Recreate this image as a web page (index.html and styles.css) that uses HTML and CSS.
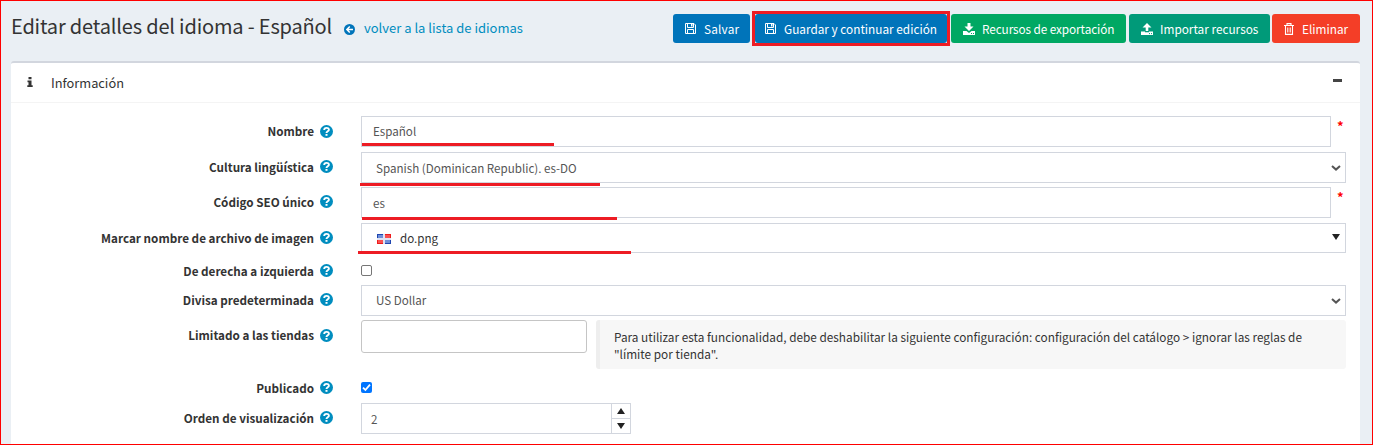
FILE: index.html
```html
<!DOCTYPE html>
<html lang="es">
<head>
<meta charset="utf-8">
<title>Editar detalles del idioma</title>
<link rel="stylesheet" href="styles.css">
</head>
<body>
<svg class="defs" aria-hidden="true">
  <symbol id="help" viewBox="0 0 13 13"><circle cx="6.5" cy="6.5" r="6.5" fill="#008dbf"/><path d="M4.200 4.900C4.200 2.200 8.900 2.200 8.900 4.700C8.900 6.400 6.500 6.200 6.500 8" fill="none" stroke="#fff" stroke-width="1.900"/><rect x="5.500" y="9" width="2" height="1.800" fill="#fff"/></symbol>
  <symbol id="save" viewBox="0 0 11 11"><path d="M.5.500H9L10.500 2V10.500H.500ZM2.500 .500V4.500H8.500V.500M2.500 10.500V6.500H8.500V10.500" fill="none" stroke="#fff"/><rect x="6" y="1" width="1.500" height="2.500" fill="#fff"/></symbol>
  <symbol id="chevron" viewBox="0 0 10 6"><path d="M1 1L5 4.600L9 1" fill="none" stroke="#555" stroke-width="2"/></symbol>
</svg>
<div class="page">
  <header class="topbar">
    <h1 class="title">Editar detalles del idioma - Español</h1>
    <a class="back"><svg class="back-icon" viewBox="0 0 12 12"><circle cx="6" cy="6" r="6" fill="#0074ba"/><path d="M9.800 6H3.500M6.300 2.800L3.100 6L6.300 9.200" fill="none" stroke="#fff" stroke-width="1.600"/></svg><span class="t">volver a la lista de idiomas</span></a>
    <div class="actions">
      <button class="btn save"><svg class="ico disk"><use href="#save"/></svg><span class="t">Salvar</span></button>
      <button class="btn continue"><svg class="ico disk"><use href="#save"/></svg><span class="t">Guardar y continuar edición</span></button>
      <button class="btn export"><svg class="ico" viewBox="0 0 12 12"><path d="M4.500 0H7.500V3.500H10.500L6 8L1.500 3.500H4.500ZM0 8H3.500L6 10L8.500 8H12V12H0Z" fill="#fff"/><path d="M8 10.500H9M10 10.500H11" stroke="#00a863"/></svg><span class="t">Recursos de exportación</span></button>
      <button class="btn import"><svg class="ico" viewBox="0 0 12 12"><path d="M4.700 8V4.500H1.500L6 0L10.500 4.500H7.300V8ZM0 8.500H4V9.300H8V8.500H12V12H0Z" fill="#fff"/><path d="M8 10.600H9M10 10.600H11" stroke="#009a79"/></svg><span class="t">Importar recursos</span></button>
      <button class="btn delete"><svg class="ico bin" viewBox="0 0 12 12"><path d="M1 2.500H11M4 2.500V.600H8V2.500M2.500 2.500V11.400H9.500V2.500M4.800 4.500V9.500M7.200 4.500V9.500" fill="none" stroke="#fff" stroke-width="1.100"/></svg><span class="t">Eliminar</span></button>
    </div>
  </header>
  <section class="card">
    <div class="card-head">
      <svg class="info" viewBox="0 0 6 10"><path d="M1.500 0H4.500V2.300H1.500ZM.500 3.500H4.500V8.200H5.700V10H.300V8.200H1.500V5.200H.500Z" fill="#333"/></svg>
      <span class="card-title">Información</span>
      <span class="collapse"></span>
    </div>
    <div class="form">
      <div class="row r-name"><label class="label"><b>Nombre</b><svg class="help"><use href="#help"/></svg></label><div class="input short"><span class="val">Español</span><i class="mark m1"></i></div><span class="req">*</span></div>
      <div class="row r-culture"><label class="label"><b>Cultura lingüística</b><svg class="help"><use href="#help"/></svg></label><div class="input select"><span>Spanish (Dominican Republic). es-DO</span><svg class="chev"><use href="#chevron"/></svg><i class="mark m2"></i></div></div>
      <div class="row r-seo"><label class="label"><b>Código SEO único</b><svg class="help"><use href="#help"/></svg></label><div class="input short"><span>es</span><i class="mark m3"></i></div><span class="req">*</span></div>
      <div class="row r-flag"><label class="label"><b>Marcar nombre de archivo de imagen</b><svg class="help"><use href="#help"/></svg></label><div class="input flagbox"><svg class="flag" viewBox="0 0 14 10"><path d="M0 0H6V4H0ZM8 6H14V10H8Z" fill="#1f46b0"/><path d="M1 1H6V4H1ZM8 6H13V9H8Z" fill="#6f8fd8"/><path d="M8 0H14V4H8ZM0 6H6V10H0Z" fill="#ee1c1c"/><path d="M8 1H13V4H8ZM1 6H6V9H1Z" fill="#fa5050"/><path d="M6 0H8V10H6ZM0 4H14V6H0Z" fill="#dfe2f2"/></svg><span class="file">do.png</span><svg class="tri" viewBox="0 0 8 6"><path d="M0 0H8L4 6Z" fill="#222"/></svg><i class="mark m4"></i></div></div>
      <div class="row r-rtl"><label class="label"><b>De derecha a izquierda</b><svg class="help"><use href="#help"/></svg></label><span class="check"></span></div>
      <div class="row r-currency"><label class="label"><b>Divisa predeterminada</b><svg class="help"><use href="#help"/></svg></label><div class="input select"><span class="val">US Dollar</span><svg class="chev"><use href="#chevron"/></svg></div></div>
      <div class="row r-stores"><label class="label"><b>Limitado a las tiendas</b><svg class="help"><use href="#help"/></svg></label><div class="multi"></div><div class="note">Para utilizar esta funcionalidad, debe deshabilitar la siguiente configuración: configuración del catálogo &gt; ignorar las reglas de<br>"límite por tienda".</div></div>
      <div class="row r-pub"><label class="label"><b>Publicado</b><svg class="help"><use href="#help"/></svg></label><span class="check on"><svg viewBox="0 0 11 11"><path d="M2 5.700L4.400 8L9 2.700" fill="none" stroke="#fff" stroke-width="1.800"/></svg></span></div>
      <div class="row r-order"><label class="label"><b>Orden de visualización</b><svg class="help"><use href="#help"/></svg></label><div class="input number"><span>2</span><span class="spin"><span class="step"><svg class="tri" viewBox="0 0 8 6"><path d="M0 6H8L4 0Z" fill="#222"/></svg></span><span class="step"><svg class="tri" viewBox="0 0 8 6"><path d="M0 0H8L4 6Z" fill="#222"/></svg></span></span></div></div>
    </div>
  </section>
</div>
</body>
</html>
```
FILE: styles.css
```css
* { box-sizing: border-box; }
body { margin: 0; font-family: "Noto Sans CJK SC", "Noto Sans", sans-serif; font-size: 13px; color: #333; overflow: hidden; }
svg { display: block; flex: none; }
.defs { position: absolute; width: 0; height: 0; }
.page { height: 445px; border: 1px solid #f00; background: #eaeff4; padding: 0 12px 0 10px; display: flex; flex-direction: column; overflow: hidden; }
.topbar { height: 60px; flex: none; display: flex; align-items: flex-start; white-space: nowrap; }
.title { margin: 10px 0 0; font-size: 20px; line-height: 30px; font-weight: 400; letter-spacing: -0.17px; width: 333px; }
.back { display: flex; align-items: center; height: 24px; margin-top: 15px; color: #008dbf; }
.back-icon { width: 11px; height: 11px; margin: 2px 9px 0 0; }
.back .t { padding-bottom: 1px; }
.actions { margin-left: auto; margin-top: 13px; display: flex; }
.btn { position: relative; height: 29px; border: 0; border-radius: 3px; padding: 0 0 0 12px; display: flex; align-items: center; color: #fff; font: inherit; font-size: 11.8px; white-space: nowrap; }
.ico { width: 12px; height: 12px; margin-right: 7px; }
.disk { width: 11px; height: 11px; margin-right: 8px; }
.bin { margin: 0 6px 0 -1px; }
.delete .t { margin-left: 1px; }
.save { width: 77px; background: #0074ba; margin-right: 5px; letter-spacing: .2px; }
.continue { width: 192px; padding-left: 10px; background: #0074ba; margin-right: 4px; }
.continue::after { content: ""; position: absolute; inset: -3px; border: 3px solid #ed1c24; }
.export { width: 175px; background: #00a863; margin-right: 3px; letter-spacing: -.1px; }
.import { width: 141px; background: #009a79; margin-right: 2px; }
.delete { width: 88px; background: #f43e27; }
.card { flex: 1; background: #fff; border-top: 2px solid #d2d6de; border-radius: 3px 3px 0 0; }
.card-head { height: 40px; border-bottom: 1px solid #f4f4f4; display: flex; align-items: center; padding: 0 18px 0 16px; }
.info { width: 6px; height: 10px; margin-bottom: 2px; }
.card-title { margin-left: 18px; font-size: 12.8px; }
.collapse { width: 9px; height: 3px; background: #444; margin: 0 0 4px auto; }
.form { padding: 13px 14px 0 0; font-size: 11.6px; }
.row { display: flex; align-items: flex-start; height: 35px; }
.r-name, .r-seo { height: 36px; }
.label { width: 322px; height: 29px; margin-right: 28px; display: flex; justify-content: flex-end; align-items: center; flex: none; white-space: nowrap; font-size: 11.7px; }
.label b { padding-bottom: 1px; }
.r-name .label, .r-stores .label { height: 31px; }
.r-name .label b, .r-stores .label b { padding-bottom: 3px; }
.help { width: 13px; height: 13px; margin-left: 6px; }
.input { position: relative; height: 31px; width: 985px; border: 1px solid #d2d6de; padding-left: 11px; display: flex; align-items: center; color: #555; }
.val { padding-bottom: 1px; }
.short { width: 970px; }
.select, .flagbox { padding-left: 14px; }
.flagbox { height: 30px; color: #333; }
.req { color: #f00; margin-left: 6px; font-size: 13px; font-weight: 700; line-height: 20px; }
.chev { width: 10px; height: 6px; margin: 0 4px 0 auto; }
.flag { width: 14px; height: 10px; margin: 2px 0 0 1px; }
.file { margin-left: 9px; padding-bottom: 1px; }
.tri { width: 8px; height: 6px; }
.flagbox .tri { margin: 0 5px 2px auto; }
.mark { position: absolute; height: 3px; background: #ed1c24; }
.m1 { left: 0; top: 26px; width: 192px; }
.m2 { left: -2px; top: 30px; width: 240px; }
.m3 { left: 0; top: 29px; width: 255px; }
.m4 { left: -4px; top: 27px; width: 273px; }
.r-culture, .r-flag { position: relative; z-index: 1; }
.r-rtl { height: 27px; }
.r-rtl .label { height: 25px; }
.check { width: 11px; height: 11px; border: 1px solid #767676; border-radius: 2px; margin-top: 7px; }
.on { border: 0; background: #0075ff; margin-top: 5px; }
.r-stores { height: 57px; }
.multi { width: 226px; height: 33px; border: 1px solid #c5c5c5; border-radius: 3px; margin-right: 9px; }
.note { width: 750px; height: 49px; background: #f7f7f7; border-left: 4px solid #eee; border-radius: 3px; padding: 8px 0 0 14px; line-height: 17px; white-space: nowrap; font-size: 11.8px; }
.r-pub { height: 26px; }
.r-pub .label { height: 21px; }
.number { width: 270px; padding-left: 9px; }
.spin { margin-left: auto; width: 19px; align-self: stretch; border-left: 1px solid #d2d6de; display: flex; flex-direction: column; }
.step { flex: 1; display: flex; align-items: center; justify-content: center; }
.step + .step { border-top: 1px solid #d2d6de; }
```
